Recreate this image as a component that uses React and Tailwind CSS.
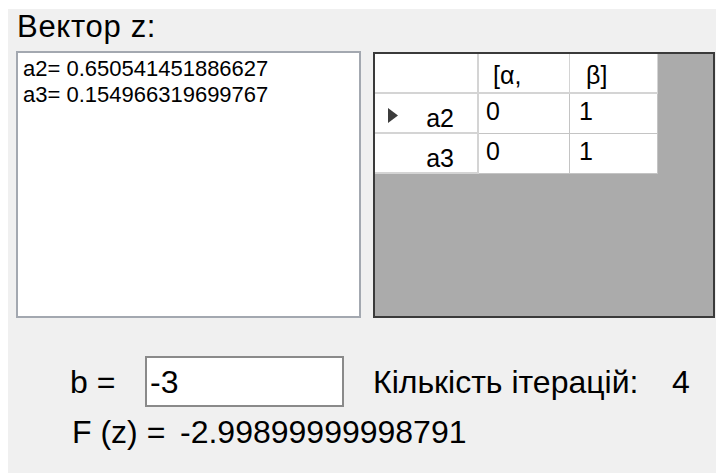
import React from "react";

const rows = [
  { name: "a2", a: "0", b: "1", current: true },
  { name: "a3", a: "0", b: "1", current: false },
];

function RowArrow() {
  return (
    <svg width="12" height="15" viewBox="0 0 12 15" className="block">
      <path d="M1 0 L11 7.5 L1 15 Z" fill="#3c3c3c" />
    </svg>
  );
}

export default function App() {
  return (
    <div
      className="w-[716px] h-[473px] bg-white pl-2 pt-[9px] overflow-hidden text-black"
      style={{ fontFamily: '"Liberation Sans", Arial, sans-serif' }}
    >
      <div className="h-full bg-[#f0f0f0] pl-2 flex flex-col">
        <div className="text-[31px] leading-[31px] tracking-[0.7px] mt-[2px] ml-px">Вектор z:</div>

        <div className="flex items-start mt-[9px]">
          {/* result list */}
          <div className="w-[345px] h-[267px] bg-white border-2 border-[#a3a8b0] pl-[5px] pt-[3px] text-[22px] leading-[26px]">
            <div>a2= 0.650541451886627</div>
            <div>a3= 0.154966319699767</div>
          </div>

          {/* bounds grid */}
          <div className="ml-[12px] mt-px w-[342px] h-[266px] bg-[#ababab] border-2 border-[#3a3a3a] text-[25px]">
            <div className="flex h-[40px]">
              <div className="w-[104px] bg-white border-r-2 border-b-2 border-[#d4d4d4]" />
              <div className="w-[91px] bg-white border-r border-b-2 border-[#d4d4d4] pl-[14px] pt-[9px] leading-[25px]">
                [α,
              </div>
              <div className="w-[88px] bg-white border-r border-b-2 border-[#d4d4d4] pl-[16px] pt-[9px] leading-[25px]">
                β]
              </div>
            </div>
            {rows.map((r) => (
              <div key={r.name} className="flex h-[40px]">
                <div className="w-[104px] bg-white border-r-2 border-b-2 border-[#d4d4d4] flex items-start pt-[12px] pl-[12px] pr-[23px] leading-[25px]">
                  <div className="w-[12px] pt-[2px]">{r.current ? <RowArrow /> : null}</div>
                  <div className="flex-1 text-right">{r.name}</div>
                </div>
                <div className="w-[91px] bg-white border-r border-b border-[#c4c4c4] pl-[7px] pt-[5px] leading-[25px]">
                  {r.a}
                </div>
                <div className="w-[88px] bg-white border-r border-b border-[#c4c4c4] pl-[9px] pt-[5px] leading-[25px]">
                  {r.b}
                </div>
              </div>
            ))}
          </div>
        </div>

        {/* parameters */}
        <div className="flex items-center mt-[38px] pl-[54px] text-[32px] leading-[32px]">
          <span className="w-[75px]">b =</span>
          <div className="w-[199px] h-[51px] bg-white border-2 border-[#8a8a8a] pl-[3px] flex items-center">
            -3
          </div>
          <span className="ml-[29px] w-[299px]">Кількість ітерацій:</span>
          <span>4</span>
        </div>
        <div className="flex mt-[9px] pl-[56px] text-[32px] leading-[32px]">
          <span className="w-[108px]">F (z) =</span>
          <span>-2.99899999998791</span>
        </div>
      </div>
    </div>
  );
}
